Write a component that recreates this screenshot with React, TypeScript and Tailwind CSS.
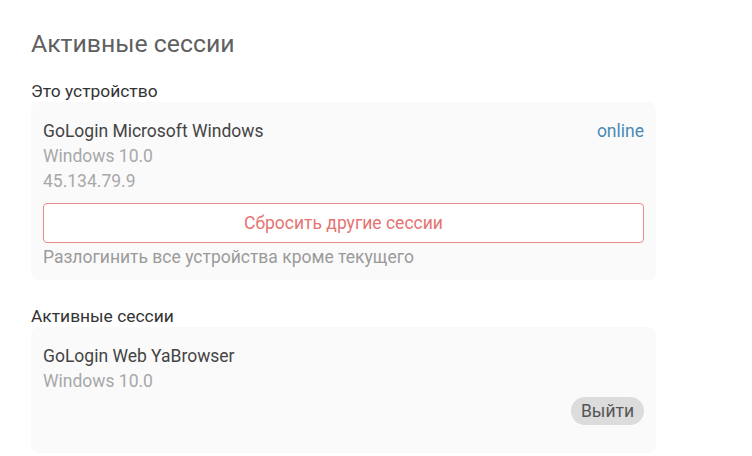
export default function App() {
  return (
    <div className="min-h-screen bg-white font-['Roboto',sans-serif] px-[31px] pt-[28px] w-[752px]">
      <h1 className="text-[24.8px] leading-[32px] text-[#606060] font-normal">Активные сессии</h1>

      <div className="mt-[21px] text-[17.4px] leading-[20px] text-[#333]">Это устройство</div>
      <div className="mt-[1px] w-[625px] rounded-lg bg-[#fafafa] px-3 pt-[17px] pb-[10px]">
        <div className="flex items-center justify-between text-[17.5px] leading-[25px]">
          <span className="text-[#444]">GoLogin Microsoft Windows</span>
          <span className="text-[#4a8ab5]">online</span>
        </div>
        <div className="text-[17.5px] leading-[25px] text-[#a8a8a8]">Windows 10.0</div>
        <div className="text-[17.5px] leading-[25px] text-[#a8a8a8]">45.134.79.9</div>
        <button className="mt-[9px] flex h-[40px] w-full items-center justify-center rounded-[4px] border border-[#e88a8a] bg-white text-[17.5px] text-[#e57373]">
          Сбросить другие сессии
        </button>
        <div className="mt-[2px] text-[17.5px] leading-[25px] text-[#9a9a9a]">
          Разлогинить все устройства кроме текущего
        </div>
      </div>

      <div className="mt-[26px] text-[17.4px] leading-[20px] text-[#333]">Активные сессии</div>
      <div className="mt-[1px] w-[625px] rounded-lg bg-[#fafafa] px-3 pt-[17px] pb-[28px]">
        <div className="text-[17.5px] leading-[25px] text-[#444]">GoLogin Web YaBrowser</div>
        <div className="text-[17.5px] leading-[25px] text-[#a8a8a8]">Windows 10.0</div>
        <div className="flex justify-end mt-[3px]">
          <button className="h-[28px] rounded-full bg-[#dcdcdc] px-[10px] text-[17.5px] leading-[28px] text-[#555]">
            Выйти
          </button>
        </div>
      </div>
    </div>
  );
}
